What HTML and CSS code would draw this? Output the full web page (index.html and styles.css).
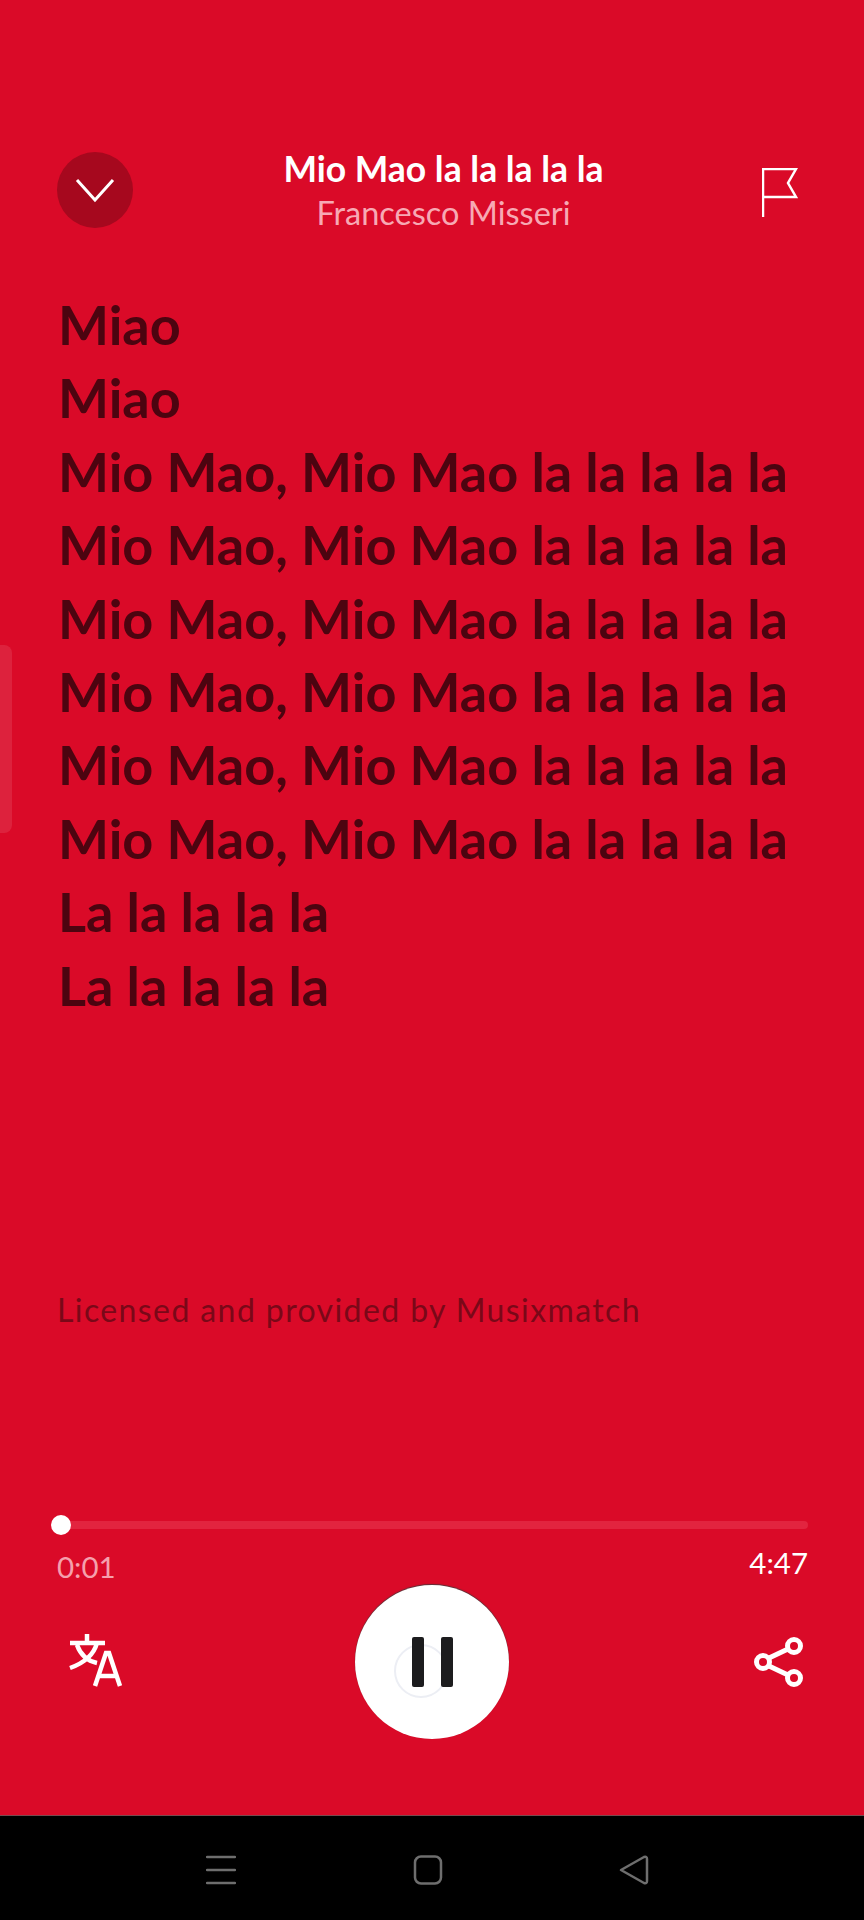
FILE: index.html
```html
<!DOCTYPE html>
<html lang="en">
<head>
  <meta charset="UTF-8">
  <meta name="viewport" content="width=device-width, initial-scale=1.0">
  <title>Lyrics</title>
  <link rel="stylesheet" href="styles.css">
</head>
<body>
  <div class="screen">
    <div class="edge-handle"></div>

    <div class="header">
      <div class="close-btn">
        <svg width="40" height="26" viewBox="0 0 40 26"><path d="M2 3 L20 23 L38 3" fill="none" stroke="#fff" stroke-width="3"/></svg>
      </div>
      <div class="track-info">
        <div class="track-title">Mio Mao la la la la la</div>
        <div class="track-artist">Francesco Misseri</div>
      </div>
      <div class="flag-btn">
        <svg width="36" height="50" viewBox="0 0 36 50"><path d="M1 49 V1 H34 L26 15 L34 29 H1" fill="none" stroke="#fff" stroke-width="2.5"/></svg>
      </div>
    </div>

    <div class="lyrics">
      <div>Miao</div>
      <div>Miao</div>
      <div>Mio Mao, Mio Mao la la la la la</div>
      <div>Mio Mao, Mio Mao la la la la la</div>
      <div>Mio Mao, Mio Mao la la la la la</div>
      <div>Mio Mao, Mio Mao la la la la la</div>
      <div>Mio Mao, Mio Mao la la la la la</div>
      <div>Mio Mao, Mio Mao la la la la la</div>
      <div>La la la la la</div>
      <div>La la la la la</div>
    </div>

    <div class="license">Licensed and provided by Musixmatch</div>

    <div class="player">
      <div class="progress">
        <div class="thumb"></div>
      </div>
      <div class="times">
        <span class="elapsed">0:01</span>
        <span class="total">4:47</span>
      </div>
      <div class="controls">
        <svg class="translate" width="56" height="56" viewBox="0 0 56 56" fill="none" stroke="#fff" stroke-width="4.5">
          <path d="M19 0 V8 M2 9 H37 M29 9 C26 20 16 29 2 34 M9 11 C13 22 20 27 29 29"/>
          <path d="M27 52 L38 19 H41 L52 52 M31 42 H48"/>
        </svg>
        <div class="pause-btn">
          <div class="ripple"></div>
          <div class="pause-bar"></div>
          <div class="pause-bar"></div>
        </div>
        <svg class="share" width="50" height="50" viewBox="0 0 50 50" fill="none" stroke="#fff" stroke-width="5">
          <circle cx="40" cy="9" r="6.5"/>
          <circle cx="9" cy="25" r="6.5"/>
          <circle cx="40" cy="41" r="6.5"/>
          <path d="M15 21 L34 12 M15 29 L34 38"/>
        </svg>
      </div>
    </div>
  </div>

  <div class="navbar">
    <svg width="30" height="30" viewBox="0 0 30 30"><path d="M1 2 H29 M1 15 H29 M1 28 H29" stroke="#6e6e6e" stroke-width="2.5" stroke-linecap="round"/></svg>
    <svg width="30" height="30" viewBox="0 0 30 30"><rect x="2" y="1.5" width="26" height="27" rx="6" fill="none" stroke="#6e6e6e" stroke-width="2.5"/></svg>
    <svg width="30" height="30" viewBox="0 0 30 30"><path d="M2 15 L25 2 Q28 1 28 4 V26 Q28 29 25 28 Z" fill="none" stroke="#6e6e6e" stroke-width="2.5" stroke-linejoin="round"/></svg>
  </div>
</body>
</html>
```

FILE: styles.css
```css
:root {
  --red: #da0a28;
  --lyric-color: #4c0410;
}

* {
  box-sizing: border-box;
}

body {
  margin: 0;
  height: 1920px;
  display: flex;
  flex-direction: column;
  background: #000;
  font-family: 'Lato', 'Liberation Sans', sans-serif;
  overflow: hidden;
}

.screen {
  position: relative;
  height: 1815px;
  padding: 152px 0 0;
  background: var(--red);
  display: flex;
  flex-direction: column;
}

/* side panel handle, sits over the page */
.edge-handle {
  position: absolute;
  left: 0;
  top: 645px;
  width: 12px;
  height: 188px;
  background: rgba(255,255,255,0.1);
  border-radius: 0 8px 8px 0;
}

.header {
  display: flex;
  align-items: flex-start;
  padding: 0 66px 0 57px;
}

.close-btn {
  width: 76px;
  height: 76px;
  border-radius: 50%;
  background: #a6081e;
  display: flex;
  align-items: center;
  justify-content: center;
  flex-shrink: 0;
}

.track-info {
  flex: 1;
  text-align: center;
  margin-top: -1px;
  padding-right: 8px;
}

.track-title {
  font-size: 35.5px;
  line-height: 36px;
  font-weight: 700;
  color: #fff;
}

.track-artist {
  margin-top: 8px;
  font-size: 32.5px;
  line-height: 36px;
  font-weight: 400;
  color: #f7a9b4;
}

.flag-btn {
  width: 36px;
  padding-top: 16px;
  flex-shrink: 0;
}

.lyrics {
  margin-top: 57px;
  padding-left: 58px;
  font-size: 54px;
  line-height: 73.4px;
  font-weight: 700;
  color: var(--lyric-color);
  white-space: nowrap;
}

.license {
  margin-top: 270px;
  padding-left: 57px;
  font-size: 32px;
  line-height: 36px;
  letter-spacing: 1.4px;
  color: #7a0818;
}

.player {
  margin-top: auto;
  padding: 0 56px 0 58px;
}

.progress {
  position: relative;
  height: 8px;
  background: #e2243f;
  border-radius: 4px;
}

.thumb {
  position: absolute;
  left: -7px;
  top: -6px;
  width: 20px;
  height: 20px;
  border-radius: 50%;
  background: #fff;
}

.times {
  display: flex;
  justify-content: space-between;
  align-items: flex-start;
  margin-top: 18px;
  font-size: 29.5px;
  line-height: 32px;
}

.elapsed {
  margin: 4px 0 0 -1px;
  color: #f5a0ad;
}

.total {
  color: #fff;
}

.controls {
  display: grid;
  grid-template-columns: 1fr auto 1fr;
  align-items: center;
  margin: 2px 0 76px -2px;
}

.translate {
  justify-self: start;
  margin-left: 12px;
}

.share {
  justify-self: end;
  margin-right: 4px;
}

.pause-btn {
  position: relative;
  width: 154px;
  height: 154px;
  border-radius: 50%;
  background: #fff;
  display: flex;
  align-items: center;
  justify-content: center;
  gap: 17px;
  box-shadow: 0 -1px 1px rgba(60,60,60,0.8);
}

.ripple {
  position: absolute;
  left: 39px;
  top: 59px;
  width: 54px;
  height: 54px;
  border-radius: 50%;
  border: 2px solid #eceef4;
}

.pause-bar {
  position: relative;
  width: 12px;
  height: 50px;
  border-radius: 2px;
  background: #1c1c1e;
}

.navbar {
  height: 105px;
  background: #000;
  border-top: 1px solid #7a4a50;
  display: flex;
  align-items: center;
  padding: 4px 215px 0 206px;
  justify-content: space-between;
}
```
